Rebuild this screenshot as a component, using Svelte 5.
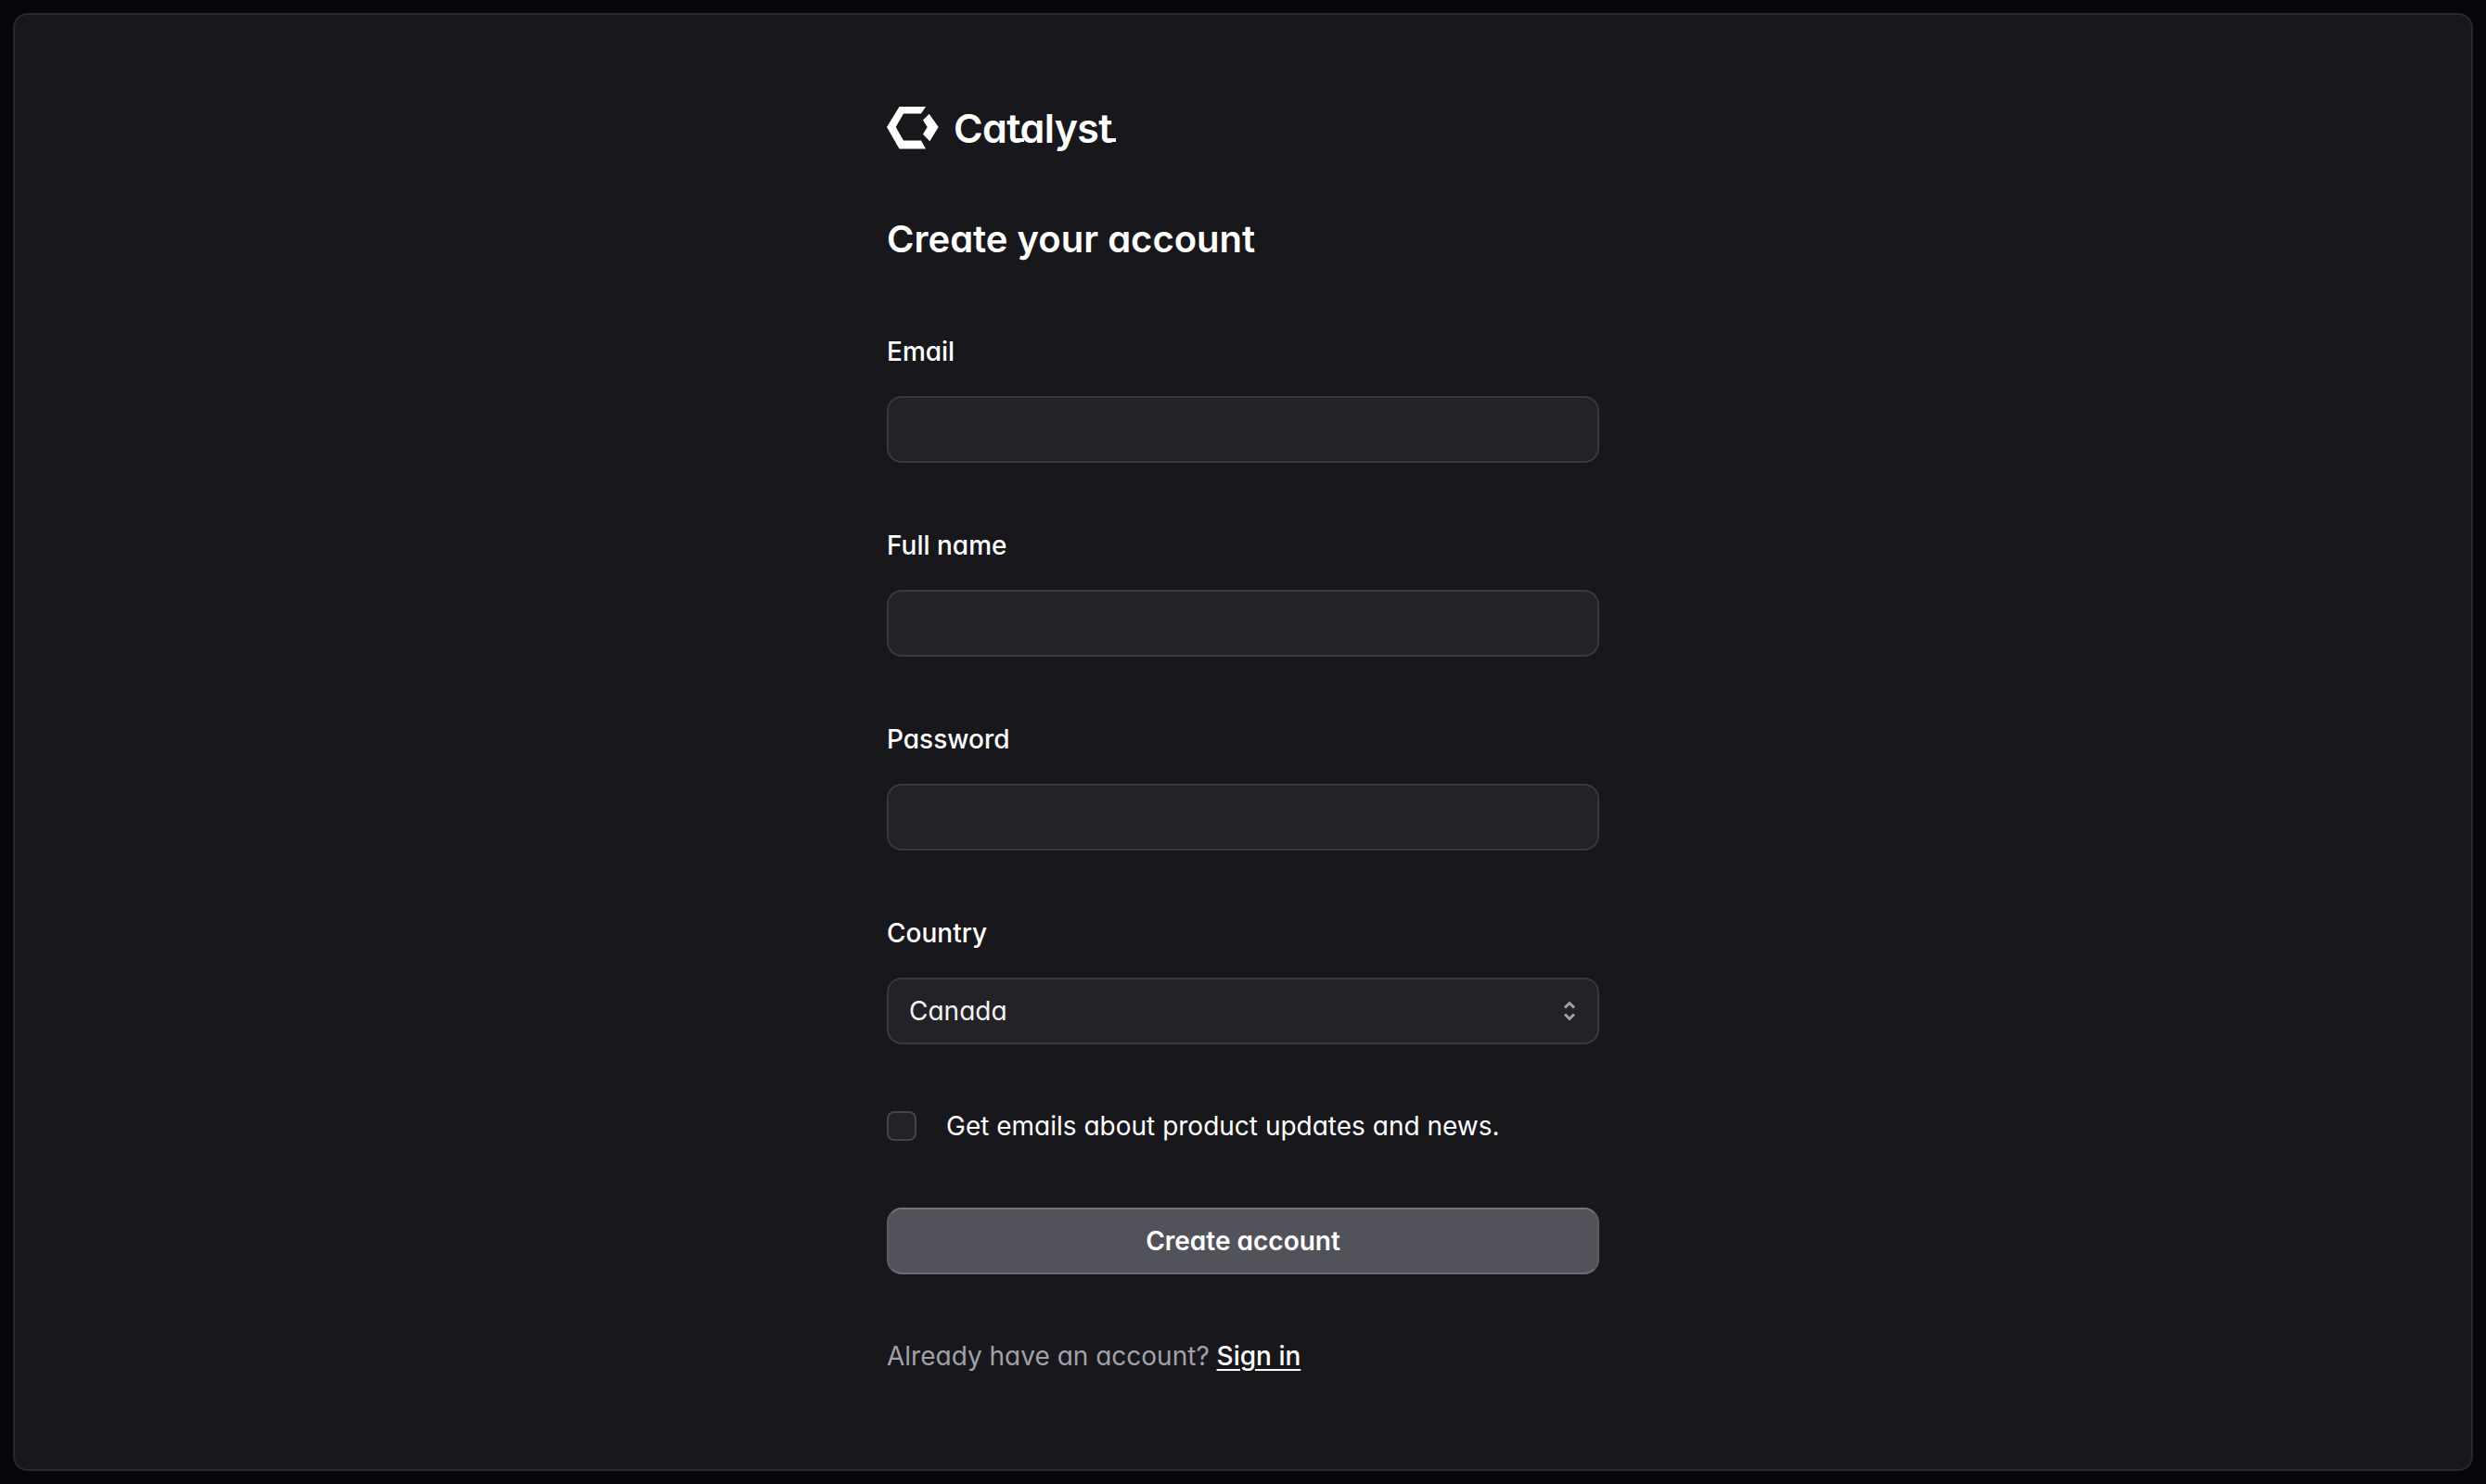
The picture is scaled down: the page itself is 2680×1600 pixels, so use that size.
<script>
  let email = ''
  let fullName = ''
  let password = ''
  let country = 'Canada'
  let updates = false
</script>

<div class="shell">
  <main class="card">
    <form class="form" on:submit|preventDefault>
      <div class="logo">
        <svg class="mark" viewBox="0 0 56 46" aria-hidden="true">
          <path d="M13.500 0H42L37 7.500H18L9.700 22L18 36.500H37L42 45.500H13.500L0 22Z" />
          <path d="M45.700 7.800L55.700 22L46.300 37.200L39 29.800L43.700 22L39 14.500Z" />
        </svg>
        <span class="wordmark">Ca<span class="t">t</span>alys<span class="t">t</span></span>
      </div>
      <h1>Create your account</h1>

      <label class="field">
        <span class="label">Email</span>
        <input type="email" bind:value={email} />
      </label>
      <label class="field">
        <span class="label">Full name</span>
        <input type="text" bind:value={fullName} />
      </label>
      <label class="field">
        <span class="label">Password</span>
        <input type="password" bind:value={password} />
      </label>
      <label class="field">
        <span class="label">Country</span>
        <span class="select">
          <select bind:value={country}>
            <option>Canada</option>
            <option>Mexico</option>
            <option>United States</option>
          </select>
          <svg class="chevrons" viewBox="0 0 16 24" aria-hidden="true">
            <path d="M3 8.500L8 3.500L13 8.500M3 15.500L8 20.500L13 15.500" />
          </svg>
        </span>
      </label>

      <label class="check">
        <input type="checkbox" bind:checked={updates} />
        <span>Get emails about product updates and news.</span>
      </label>

      <button type="submit">Create account</button>

      <p class="foot">Already have an account? <a href="#signin">Sign in</a></p>
    </form>
  </main>
</div>

<style>
  :global(body) {
    margin: 0;
    background: #07070b;
  }

  .shell {
    box-sizing: border-box;
    height: 1600px;
    padding: 14px;
    font-family: Inter, sans-serif;
    font-feature-settings: 'cv11';
    color: #fff;
  }

  .card {
    box-sizing: border-box;
    height: 100%;
    display: flex;
    justify-content: center;
    background: #18181c;
    border: 2px solid rgba(255, 255, 255, 0.08);
    border-radius: 16px;
  }

  .form {
    width: 768px;
    padding-top: 98px;
    display: flex;
    flex-direction: column;
  }

  .logo {
    display: flex;
    align-items: center;
    gap: 16px;
    height: 48px;
  }

  .mark {
    width: 56px;
    height: 46px;
    fill: #fff;
  }

  .wordmark {
    font-size: 43px;
    font-weight: 600;
    letter-spacing: -0.7px;
  }

  .t {
    position: relative;
  }

  .t::after {
    content: '';
    position: absolute;
    left: 72%;
    bottom: 11px;
    width: 8px;
    height: 4px;
    background: #fff;
  }

  h1 {
    margin: 68px 0 4px;
    font-size: 40px;
    line-height: 56px;
    font-weight: 600;
  }

  .field {
    display: flex;
    flex-direction: column;
    gap: 24px;
    margin-top: 65px;
  }

  .label {
    font-size: 28px;
    line-height: 48px;
    font-weight: 500;
  }

  input[type='email'],
  input[type='text'],
  input[type='password'],
  select {
    box-sizing: border-box;
    width: 100%;
    height: 72px;
    padding: 0 22px;
    background: rgba(255, 255, 255, 0.05);
    border: 2px solid rgba(255, 255, 255, 0.1);
    border-radius: 16px;
    color: #f4f4f5;
    font: 400 28px Inter, sans-serif;
    font-feature-settings: 'cv11';
    appearance: none;
  }

  .select {
    position: relative;
    display: block;
  }

  .chevrons {
    position: absolute;
    top: 24px;
    right: 24px;
    width: 16px;
    height: 24px;
    fill: none;
    stroke: #a1a1aa;
    stroke-width: 3;
  }

  .check {
    display: flex;
    align-items: center;
    gap: 32px;
    margin-top: 64px;
    font-size: 28px;
    line-height: 48px;
  }

  input[type='checkbox'] {
    box-sizing: border-box;
    width: 32px;
    height: 32px;
    margin: 0;
    background: rgba(255, 255, 255, 0.05);
    border: 2px solid rgba(255, 255, 255, 0.15);
    border-radius: 8px;
    appearance: none;
  }

  button {
    height: 72px;
    margin-top: 64px;
    background: #52525b;
    border: 2px solid;
    border-color: rgba(255, 255, 255, 0.2) rgba(255, 255, 255, 0.06) rgba(255, 255, 255, 0.14);
    border-radius: 16px;
    color: #fff;
    font: 600 28px Inter, sans-serif;
    font-feature-settings: 'cv11';
  }

  .foot {
    margin: 64px 0 0;
    font-size: 28px;
    line-height: 48px;
    color: #a1a1aa;
  }

  .foot a {
    color: #fff;
    font-weight: 500;
    text-underline-offset: 4px;
  }
</style>
